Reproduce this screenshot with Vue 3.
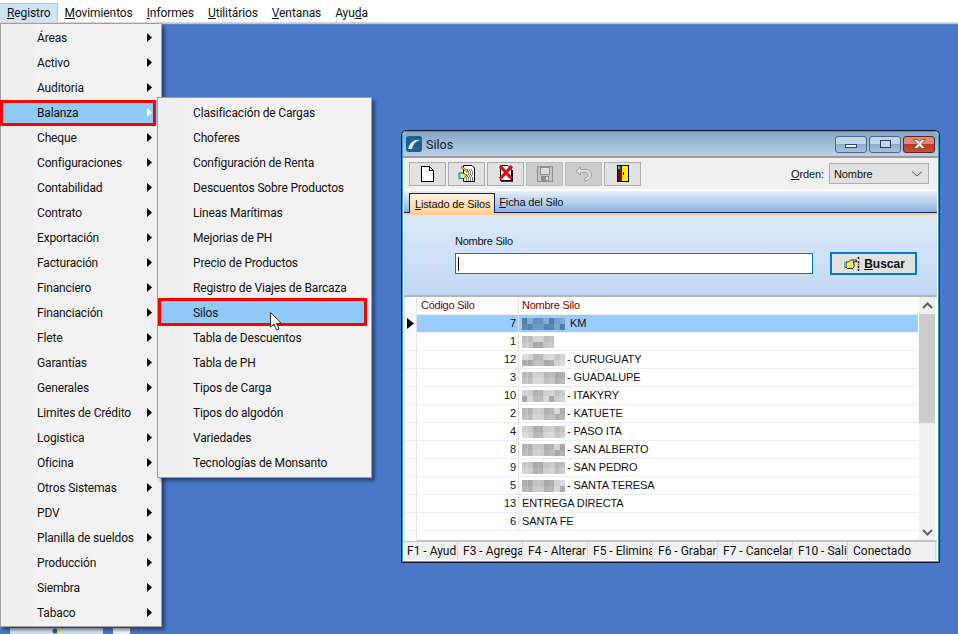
<script setup>
const topMenu = [
  ['R', 'egistro', true], ['M', 'ovimientos'], ['I', 'nformes'], ['U', 'tilitários'], ['V', 'entanas'], ['Ayu', 'da', false, 'd']
]
const mainItems = ['Áreas','Activo','Auditoria','Balanza','Cheque','Configuraciones','Contabilidad','Contrato','Exportación','Facturación','Financiero','Financiación','Flete','Garantías','Generales','Limites de Crédito','Logistica','Oficina','Otros Sistemas','PDV','Planilla de sueldos','Producción','Siembra','Tabaco']
const subItems = ['Clasificación de Cargas','Choferes','Configuración de Renta','Descuentos Sobre Productos','Lineas Marítimas','Mejorias de PH','Precio de Productos','Registro de Viajes de Barcaza','Silos','Tabla de Descuentos','Tabla de PH','Tipos de Carga','Tipos do algodón','Variedades','Tecnologías de Monsanto']
const rows = [
  { c: 7, m: 43, t: 'KM', sel: true },
  { c: 1, m: 32, t: '' },
  { c: 12, m: 43, t: '- CURUGUATY' },
  { c: 3, m: 43, t: '- GUADALUPE' },
  { c: 10, m: 43, t: '- ITAKYRY' },
  { c: 2, m: 43, t: '- KATUETE' },
  { c: 4, m: 43, t: '- PASO ITA' },
  { c: 8, m: 43, t: '- SAN ALBERTO' },
  { c: 9, m: 43, t: '- SAN PEDRO' },
  { c: 5, m: 43, t: '- SANTA TERESA' },
  { c: 13, m: 0, t: 'ENTREGA DIRECTA' },
  { c: 6, m: 0, t: 'SANTA FE' }
]
const status = [
  ['F1 - Ayud', 53], ['F3 - Agrega', 65], ['F4 - Alterar', 65], ['F5 - Elimina', 65], ['F6 - Grabar', 65], ['F7 - Cancelar', 75], ['F10 - Salir', 55], ['Conectado', 88]
]
function cells(row, idx) {
  const out = []
  const cols = Math.ceil(row.m / 5.4)
  for (let y = 0; y < 2; y++) {
    for (let x = 0; x < cols; x++) {
      const n = (x * 7 + y * 13 + idx * 5 + x * x * 3) % 11
      const v = 168 + n * 5
      let fill = `rgb(${v},${v},${v})`
      if (row.sel) fill = `rgb(${80 + n * 5},${125 + n * 5},${175 + n * 3})`
      out.push({ x: x * 5.4, y: y * 6, fill, k: `${x}-${y}` })
    }
  }
  return out
}
</script>

<template>
  <div class="desktop">
    <nav class="menubar">
      <span v-for="(m, i) in topMenu" :key="i" class="top-item" :class="{ active: m[2] }">
        <template v-if="m[3]">Ayu<u>d</u>a</template>
        <template v-else><u>{{ m[0] }}</u>{{ m[1] }}</template>
      </span>
    </nav>

    <div class="taskbit one">
      <svg width="12" height="6" viewBox="0 0 12 6"><circle cx="4" cy="3" r="2.5" fill="#1e6b55"/><rect x="6" y="2" width="5" height="4" fill="#efe37a"/></svg>
    </div>
    <div class="taskbit two"></div>
    <div class="taskbit three"></div>

    <section class="window">
      <header class="titlebar">
        <span class="app-icon">
          <svg width="16" height="16" viewBox="0 0 16 16"><rect width="16" height="16" rx="3" fill="#1f5f92"/><path d="M2 13 C4 6 9 3 14 4 C10 5 7 8 6 13 Z" fill="#dfeefa"/></svg>
        </span>
        <span class="title">Silos</span>
        <span class="winbtns">
          <span class="wb min"><i></i></span>
          <span class="wb max"><i></i></span>
          <span class="wb close">
            <svg width="13" height="10" viewBox="0 0 13 10"><path d="M.5 .5 H4 L6.500 2.500 L9 .5 H12.500 L8.500 5 L12.500 9.500 H9 L6.500 7.500 L4 9.500 H.5 L4.500 5 Z" fill="#f4ece8" stroke="#7c2a1e" stroke-width=".7"/></svg>
          </span>
        </span>
      </header>

      <div class="toolbar">
        <div class="tools">
          <button class="tool">
            <svg width="13" height="16" viewBox="0 0 13 16" shape-rendering="crispEdges"><path d="M.5 .5 H8.500 L12.500 4.500 V15.500 H.5 Z" fill="#fff" stroke="#000"/><path d="M8.500 .5 V4.500 H12.500" fill="none" stroke="#000"/></svg>
          </button>
          <button class="tool">
            <svg width="18" height="17" viewBox="0 0 18 17"><path d="M5.500 .5 H14 L16.500 3 V16.500 H5.500 Z" fill="#fff" stroke="#000"/><path d="M9 5h6M10 7h5M10 9h5M9 11h6M8 13h7M8 15h7" stroke="#000" stroke-dasharray="1 1"/><path d="M4 1 L10 6 L9 7.500 L3 2.500 Z" fill="#e8d800" stroke="#333" stroke-width=".6"/><path d="M1 8 H5 L9 10 L6 13.500 H1 Z" fill="#f5ef50" stroke="#222" stroke-width=".8"/><rect x="0" y="8.500" width="2.500" height="5" fill="#28c8d8"/></svg>
          </button>
          <button class="tool">
            <svg width="14" height="17" viewBox="0 0 14 17"><path d="M1.500 .5 H9 L12.500 4 V15.500 H1.500 Z" fill="#fff" stroke="#000"/><path d="M2 16 H13.500 V5" fill="none" stroke="#000" stroke-width="1.500"/><path d="M1 1 L13 14 M13 1 L1 14" stroke="#e01010" stroke-width="3.200"/></svg>
          </button>
          <button class="tool off">
            <svg width="16" height="16" viewBox="0 0 16 16" shape-rendering="crispEdges"><rect x=".5" y=".5" width="15" height="15" fill="#c4c4c4" stroke="#8e8e8e"/><rect x="3.500" y="1" width="9" height="7.500" fill="#dcdcdc" stroke="#8e8e8e"/><rect x="4" y="10" width="8" height="5" fill="#8e8e8e"/><rect x="9" y="11" width="2" height="3" fill="#ddd"/></svg>
          </button>
          <button class="tool off">
            <svg width="18" height="16" viewBox="0 0 18 16"><path d="M1 5 L5.500 1 V3.500 H11 C15 3.500 16.500 6.500 16.500 9 C16.500 12 13 15 9 15 L10 12 C12 12 13 10.500 13 9 C13 7.500 12 6.500 10 6.500 H5.500 V9 Z" fill="#e2e2e2" stroke="#9e9e9e"/></svg>
          </button>
          <button class="tool">
            <svg width="12" height="17" viewBox="0 0 12 17" shape-rendering="crispEdges"><rect x=".5" y=".5" width="11" height="16" fill="#ffee00" stroke="#000"/><rect x="1" y="1" width="4" height="15" fill="#6e1010"/><rect x="1" y="1" width="2" height="3" fill="#28c8d8"/><rect x="6" y="7" width="1" height="3" fill="#000"/></svg>
          </button>
        </div>
        <label class="order"><span><u>O</u>rden:</span>
          <span class="select">Nombre
            <svg width="12" height="6" viewBox="0 0 12 6"><path d="M1 .5 L6 5 L11 .5" fill="none" stroke="#555"/></svg>
          </span>
        </label>
      </div>

      <div class="tabstrip">
        <span class="tab on"><u>L</u>istado de Silos</span>
        <span class="tab"><u>F</u>icha del Silo</span>
      </div>

      <div class="search">
        <div class="field">
          <span class="flabel">Nombre Silo</span>
          <div class="input"><i class="caret"></i></div>
        </div>
        <button class="find">
          <svg width="16" height="14" viewBox="0 0 16 14"><path d="M2 5 H4.500 L6.500 3 H12.500 V4.800 H9 L10 6 V10 L8.500 11.500 H3.500 L2 10 Z" fill="#f8f060" stroke="#111" stroke-width=".9"/><rect x="0" y="5" width="2" height="6" fill="#28c8d8"/><path d="M14.500 0 V2 M14.500 4 V6 M14.500 9 V11 M14.500 12 V14" stroke="#111" stroke-width="1.500"/><path d="M14.500 6.500 V8.500" stroke="#e01010" stroke-width="1.500"/></svg>
          <span><u>B</u>uscar</span>
        </button>
      </div>

      <div class="grid-wrap">
        <div class="grid">
          <div class="grow head">
            <span class="gi"></span>
            <span class="gc">Código Silo</span>
            <span class="gn">Nombre Silo</span>
          </div>
          <div v-for="(r, idx) in rows" :key="r.c" class="grow" :class="{ sel: r.sel }">
            <span class="gi"><svg v-if="r.sel" width="7" height="11" viewBox="0 0 7 11"><path d="M0 0 L7 5.500 L0 11 Z" fill="#000"/></svg></span>
            <span class="gc num">{{ r.c }}</span>
            <span class="gn">
              <svg v-if="r.m" class="mosaic" :width="r.m" height="12" :viewBox="`0 0 ${r.m} 12`">
                <rect v-for="c in cells(r, idx)" :key="c.k" :x="c.x" :y="c.y" width="5.500" height="6" :fill="c.fill" />
              </svg>
              <span>{{ r.t }}</span>
            </span>
          </div>
          <div class="grow blank"><span class="gi"></span></div>
        </div>
        <div class="scroll">
          <svg width="11" height="7" viewBox="0 0 11 7"><path d="M1 6 L5.500 1.500 L10 6" fill="none" stroke="#606060" stroke-width="2"/></svg>
          <div class="thumb"></div>
          <div class="track"></div>
          <svg width="11" height="7" viewBox="0 0 11 7"><path d="M1 1 L5.500 5.500 L10 1" fill="none" stroke="#606060" stroke-width="2"/></svg>
        </div>
      </div>

      <footer class="statusbar">
        <span v-for="s in status" :key="s[0]" class="sb" :style="{ width: s[1] + 'px' }">{{ s[0] }}</span>
      </footer>
    </section>

    <div class="menu main">
      <div v-for="m in mainItems" :key="m" class="item" :class="{ hot: m === 'Balanza' }">
        <span class="label">{{ m }}</span>
        <svg class="arrow" width="5" height="9" viewBox="0 0 5 9"><path d="M0 0 L5 4.500 L0 9 Z" :fill="m === 'Balanza' ? '#fff' : '#000'"/></svg>
      </div>
    </div>

    <div class="menu sub">
      <div v-for="m in subItems" :key="m" class="item" :class="{ hot: m === 'Silos' }">
        <span class="label">{{ m }}</span>
        <svg v-if="m === 'Silos'" class="cursor" width="13" height="19" viewBox="0 0 13 19"><path d="M.5 .5 V15 L4 12 L6.500 18 L9 17 L6.500 11.500 H11.500 Z" fill="#fff" stroke="#333"/></svg>
      </div>
    </div>
  </div>
</template>

<style>
html, body { margin: 0; padding: 0; background: #4a78c8; }
</style>

<style scoped>
.desktop {
  position: relative;
  width: 958px;
  height: 634px;
  overflow: hidden;
  background: #4a78c8;
  font-family: Roboto, "Noto Sans", sans-serif;
  font-size: 12px;
  color: #111;
}
.menubar {
  height: 19px;
  padding-top: 3px;
  display: flex;
  background: #fff;
  border-bottom: 1px solid #d8d8d8;
  box-shadow: 0 1px 1px #c6c6c6;
  letter-spacing: -.1px;
}
.top-item {
  height: 19px;
  line-height: 20px;
  padding: 0 7px;
  box-sizing: border-box;
}
.top-item.active {
  background: #cde6f7;
  border: 1px solid #9fcdef;
  border-bottom: 0;
  border-left: 0;
  line-height: 19px;
  padding: 0 6px 0 7px;
}
.taskbit { position: absolute; top: 628px; height: 6px; }
.taskbit.one { left: 10px; width: 93px; background: #cfe0f3; display: flex; justify-content: center; }
.taskbit.two { left: 113px; width: 17px; background: #eef2f8; }
.taskbit.three { left: 138px; width: 1px; background: #3e66ad; top: 620px; height: 14px; }

/* window on the desktop */
.window {
  position: absolute;
  left: 401px;
  top: 130px;
  width: 539px;
  height: 433px;
  box-sizing: border-box;
  display: flex;
  flex-direction: column;
  background: #fff;
  border: 1px solid #0e1a2b;
  border-radius: 5px 5px 0 0;
  box-shadow: inset 0 0 0 1px #2b9ec9;
  padding: 1px 2px 2px;
}
.titlebar {
  height: 24px;
  flex: none;
  margin: 0 -1px;
  display: flex;
  align-items: center;
  padding: 0 3px;
  background: linear-gradient(#86a7ca, #b9d0e7);
  border-bottom: 2px solid #9b9b9b;
  border-radius: 4px 4px 0 0;
}
.app-icon { display: flex; margin-right: 4px; }
.title { font-size: 12.5px; color: #10202f; flex: 1; }
.winbtns { display: flex; gap: 2px; }
.wb {
  width: 32px;
  height: 17px;
  box-sizing: border-box;
  border: 1px solid #4c6785;
  border-radius: 3px;
  display: flex;
  align-items: center;
  justify-content: center;
  background: linear-gradient(#bfd5ea 45%, #8dadcf 50%, #a6c2dc);
}
.wb.min i { width: 10px; height: 2px; background: #eef3f8; border: 1px solid #34495f; margin-top: 4px; }
.wb.max i { width: 9px; height: 6px; border: 1px solid #2b3f55; background: #c4d6e8; }
.wb.close { background: linear-gradient(#d98a78 45%, #bb3b22 50%, #c0533a); border-color: #5e2620; }

.toolbar {
  height: 31px;
  flex: none;
  display: flex;
  align-items: center;
  justify-content: space-between;
  background: #f0f0f0;
  padding: 0 8px 0 5px;
  border-bottom: 2px solid #fff;
}
.tools { display: flex; gap: 2px; }
.tool {
  width: 37px;
  height: 24px;
  padding: 0;
  display: flex;
  align-items: center;
  justify-content: center;
  background: #e1e1e1;
  border: 1px solid #adadad;
  box-sizing: border-box;
}
.tool.off { background: #cccccc; border-color: #bfbfbf; }
.order {
  display: flex;
  align-items: center;
  gap: 5px;
  font: 11px "Liberation Sans", sans-serif;
  letter-spacing: -.1px;
}
.select {
  width: 100px;
  height: 21px;
  box-sizing: border-box;
  background: #e1e1e1;
  border: 1px solid #adadad;
  display: flex;
  align-items: center;
  justify-content: space-between;
  padding: 1px 5px 0 4px;
}
.tabstrip {
  height: 21px;
  flex: none;
  display: flex;
  align-items: flex-end;
  padding-left: 5px;
  background: linear-gradient(#e6f0fc, #8fb2de);
  border-bottom: 1px solid #10206f;
  font: 11px "Liberation Sans", sans-serif;
  letter-spacing: -.15px;
}
.tab { height: 19px; line-height: 18px; padding: 0 4px; }
.tab.on {
  height: 20px;
  margin-bottom: -1px;
  padding: 0 4px 0 5px;
  line-height: 20px;
  background: linear-gradient(#fff3e2, #ffd097);
  border: 1px solid #10206f;
  border-bottom: 0;
  box-sizing: border-box;
}
.search {
  height: 82px;
  flex: none;
  box-sizing: border-box;
  display: flex;
  align-items: flex-start;
  border-top: 2px solid #ffcb8e;
  padding: 19px 20px 0 51px;
  background: linear-gradient(#dce9fb, #c2d8f4);
  font: 11px "Liberation Sans", sans-serif;
  letter-spacing: -.25px;
}
.field { display: flex; flex-direction: column; gap: 4px; }
.flabel { line-height: 15px; }
.input {
  width: 358px;
  height: 21px;
  box-sizing: border-box;
  background: #fff;
  border: 1px solid #0078d7;
  display: flex;
  align-items: center;
  padding-left: 2px;
}
.caret { width: 1px; height: 14px; background: #000; }
.find {
  margin: 18px 0 0 17px;
  width: 87px;
  height: 23px;
  padding: 0 0 0 2px;
  display: flex;
  align-items: center;
  justify-content: center;
  gap: 4px;
  background: #e1e1e1;
  border: 2px solid #0078d7;
  box-sizing: border-box;
  font: bold 12px "Liberation Sans", sans-serif;
  color: #111;
}
.grid-wrap {
  flex: 1;
  display: flex;
  min-height: 0;
  background: #fff;
  border-top: 2px solid #b4b4b4;
  border-bottom: 2px solid #c4c4c4;
  font: 11px "Liberation Sans", sans-serif;
  letter-spacing: -.1px;
}
.grid { flex: 1; min-width: 0; }
.grow { display: flex; height: 18px; box-sizing: border-box; border-bottom: 1px solid #ececec; line-height: 17px; }
.grow.sel { background: #99ccff; border-bottom-color: #f4f4f4; }
.grow.head { color: #7a0000; letter-spacing: -.25px; }
.grow.blank { height: 10px; border-bottom: 0; }
.gi {
  width: 13px;
  flex: none;
  border-right: 1px solid #e4e4e4;
  border-left: 1px solid #e4e4e4;
  box-sizing: border-box;
  display: flex;
  align-items: center;
  justify-content: center;
  background: #fff;
}
.gc { width: 102px; flex: none; box-sizing: border-box; padding: 0 2px 0 4px; border-right: 1px solid #e4e4e4; }
.gc.num { text-align: right; }
.gn { flex: 1; padding-left: 3px; display: flex; align-items: center; gap: 2px; white-space: nowrap; }
.sel .gn span { margin-left: 3px; }
.mosaic { flex: none; }
.scroll {
  width: 16px;
  flex: none;
  margin: 0 2px 0 1px;
  background: #f0f0f0;
  display: flex;
  flex-direction: column;
  align-items: center;
  padding: 5px 0 4px;
  box-sizing: border-box;
}
.thumb { width: 100%; height: 109px; background: #cdcdcd; margin-top: 5px; }
.track { flex: 1; }
.statusbar {
  height: 18px;
  flex: none;
  display: flex;
  background: #f0f0f0;
  overflow: hidden;
  padding-left: 1px;
}
.sb {
  flex: none;
  box-sizing: border-box;
  padding-left: 5px;
  border-right: 1px solid #d9d9d9;
  overflow: hidden;
  white-space: nowrap;
  line-height: 19px;
}
.sb:first-child { padding-left: 2px; }

/* popup menus over the desktop */
.menu {
  position: absolute;
  box-sizing: border-box;
  background: linear-gradient(90deg, #efefef 33px, #f2f2f2 33px);
  border: 1px solid #a0a0a0;
  box-shadow: 3px 3px 3px rgba(20, 30, 50, .55);
  letter-spacing: -.16px;
}
.menu.main { left: 0; top: 23px; width: 162px; height: 604px; padding: 1px 0; }
.menu.sub { left: 157px; top: 97px; width: 215px; height: 381px; padding: 2px 0; }
.item {
  position: relative;
  height: 25px;
  line-height: 27px;
  padding-left: 36px;
  box-sizing: border-box;
  white-space: nowrap;
}
.sub .item { padding-left: 35px; }
.arrow { position: absolute; right: 9px; top: 8px; }
.item.hot { background: #91c9f7; }
.sub .item.hot { margin-right: 4px; }
.item.hot::after {
  content: "";
  position: absolute;
  pointer-events: none;
  border: 3px solid #f00;
  box-sizing: border-box;
}
.main .item.hot::after { left: -1px; right: 5px; top: 0; bottom: -1px; }
.sub .item.hot::after { left: 0; right: 0; top: -2px; bottom: -1px; }
.cursor { position: absolute; left: 112px; top: 12px; z-index: 2; }
</style>
